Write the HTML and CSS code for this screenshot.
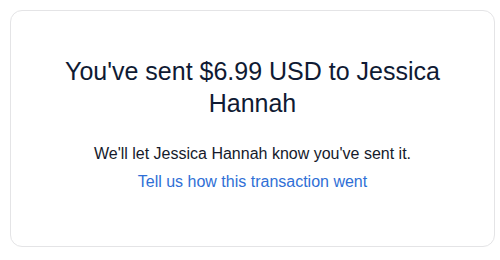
FILE: index.html
```html
<!DOCTYPE html>
<html>
<head>
<meta charset="utf-8">
<link rel="stylesheet" href="styles.css">
</head>
<body>
<div class="card">
  <h1 class="title">You've sent $6.99 USD to Jessica Hannah</h1>
  <p class="note">We'll let Jessica Hannah know you've sent it.</p>
  <a class="link" href="#">Tell us how this transaction went</a>
</div>
</body>
</html>
```
FILE: styles.css
```css
html, body {
  margin: 0;
  padding: 0;
  background: #ffffff;
}
body {
  padding: 10px 5px 13px 10px;
  font-family: "Liberation Sans", Arial, sans-serif;
}
.card {
  box-sizing: border-box;
  width: 485px;
  height: 237px;
  border: 1px solid #e4e4e6;
  border-radius: 12px;
  display: flex;
  flex-direction: column;
  align-items: center;
  padding: 44px 40px 0;
  text-align: center;
}
.title {
  margin: 0;
  font-size: 25px;
  font-weight: 400;
  line-height: 32px;
  color: #0f1a33;
}
.note {
  margin: 24px 0 0;
  font-size: 16px;
  line-height: 22px;
  color: #151a2b;
}
.link {
  margin-top: 6px;
  font-size: 16px;
  line-height: 22px;
  color: #2f6fd6;
  text-decoration: none;
}
```
